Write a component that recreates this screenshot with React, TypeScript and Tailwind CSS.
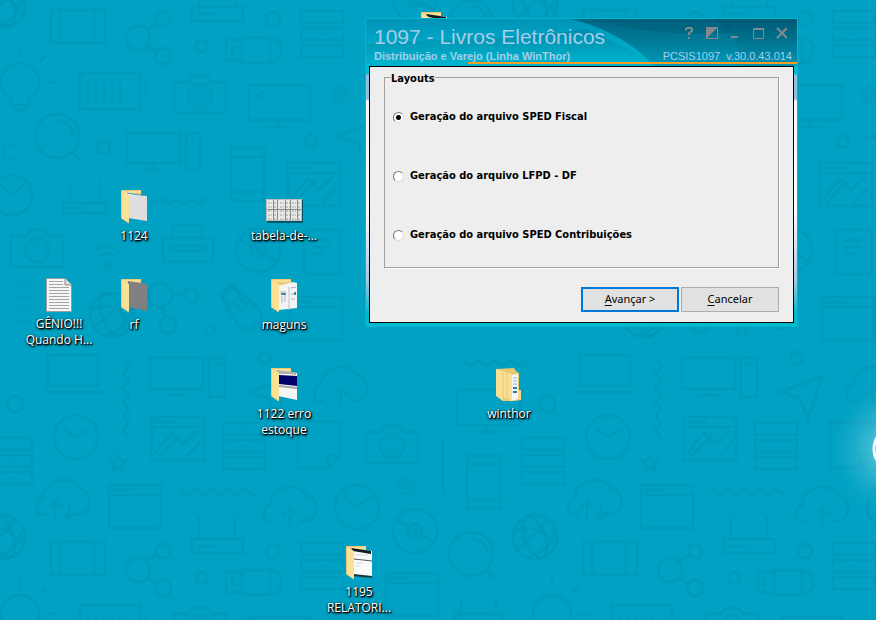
import type { ReactNode } from "react";

type IconKind = "paper" | "dark" | "docs" | "blue" | "report" | "full" | "text" | "sheet";

interface Shortcut {
  kind: IconKind;
  lines: string[];
  place: string;
}

const shortcuts: Shortcut[] = [
  { kind: "report", lines: [], place: "left-[394px] top-3" },
  { kind: "paper", lines: ["1124"], place: "left-[94px] top-[190px]" },
  { kind: "sheet", lines: ["tabela-de-..."], place: "left-[244px] top-[190px]" },
  { kind: "text", lines: ["GÊNIO!!!", "Quando H..."], place: "left-[19px] top-[278px]" },
  { kind: "dark", lines: ["rf"], place: "left-[94px] top-[279px]" },
  { kind: "docs", lines: ["maguns"], place: "left-[244px] top-[279px]" },
  { kind: "blue", lines: ["1122 erro", "estoque"], place: "left-[244px] top-[368px]" },
  { kind: "full", lines: ["winthor"], place: "left-[469px] top-[368px]" },
  { kind: "report", lines: ["1195", "RELATORI..."], place: "left-[319px] top-[546px]" },
];

const layouts = [
  { id: "fiscal", label: "Geração do arquivo SPED Fiscal" },
  { id: "lfpd", label: "Geração do arquivo LFPD - DF" },
  { id: "contrib", label: "Geração do arquivo SPED Contribuições" },
];

function Servers({ x, y }: { x: number; y: number }) {
  return (
    <g transform={`translate(${x} ${y})`}>
      <rect width="42" height="12" />
      <rect y="17" width="42" height="12" />
      <rect y="34" width="42" height="12" />
      <path d="M17 6h8M17 23h8M17 40h8" strokeWidth="1" />
    </g>
  );
}

function Camera({ x, y }: { x: number; y: number }) {
  return (
    <g transform={`translate(${x} ${y})`}>
      <path d="M0 6H15L19 0H33L37 6H52V37H0Z" />
      <circle cx="26" cy="20" r="12" />
      <circle cx="26" cy="20" r="8" strokeWidth="1" />
    </g>
  );
}

function Share({ x, y }: { x: number; y: number }) {
  return (
    <g transform={`translate(${x} ${y})`}>
      <circle r="12" />
      <circle cx="25" cy="-19" r="7" />
      <circle cx="25" cy="18" r="8" />
      <path d="M9-9L20-15M10 8L18 14" />
    </g>
  );
}

function Browser({ x, y, picture }: { x: number; y: number; picture?: boolean }) {
  return (
    <g transform={`translate(${x} ${y})`}>
      <path d="M0 0H52V43H0ZM0 10H52M4 5H24" />
      {picture && <path d="M3 36L20 16L31 27L46 13M6 40L28 18M34 40L49 24" />}
    </g>
  );
}

function Globe({ x, y }: { x: number; y: number }) {
  return (
    <g transform={`translate(${x} ${y})`}>
      <circle r="22" />
      <ellipse rx="10" ry="22" transform="rotate(-20)" />
      <path d="M-21-5Q0-17 20 8M-18 13Q0-2 13-18M-8 20Q12 18 20-8" />
    </g>
  );
}

function Clock({ x, y }: { x: number; y: number }) {
  return (
    <g transform={`translate(${x} ${y})`}>
      <circle r="22" />
      <path d="M-13-9L0 0L12-7" />
    </g>
  );
}

function Magnifier({ x, y }: { x: number; y: number }) {
  return (
    <g transform={`translate(${x} ${y})`}>
      <circle r="22" />
      <path d="M0-16Q15-14 16 0M16 17L24 25" />
    </g>
  );
}

function Cloud({ x, y, both }: { x: number; y: number; both?: boolean }) {
  return (
    <g transform={`translate(${x} ${y})`}>
      <path d="M-16 13C-30 17-29-1-20-3C-19-24 11-26 15-13C30-12 30 13 15 13H10" />
      {both ? <path d="M-8 18V0L-14 6M-8 0L-2 6M6 0V18L0 12M6 18L12 12" /> : <path d="M0 18V0L-7 7M0 0L7 7" />}
    </g>
  );
}

function Disc({ x, y }: { x: number; y: number }) {
  return (
    <g transform={`translate(${x} ${y})`}>
      <circle r="22" />
      <circle r="7" />
      <circle r="2" />
      <path d="M-18-11L-7-4M7 4L18 11" />
    </g>
  );
}

// The pattern repeats every 532px; shapes that cross a tile edge are drawn on both sides of it.
function Wallpaper() {
  return (
    <svg className="absolute inset-0 h-full w-full" aria-hidden="true">
      <defs>
        <pattern id="gadgets" width="532" height="532" patternUnits="userSpaceOnUse">
          <g fill="none" stroke="#008eb1" strokeWidth="3" strokeOpacity="0.36">
            <Globe x={3} y={5} />
            <Globe x={535} y={5} />
            <Globe x={3} y={537} />
            <Globe x={535} y={537} />
            <Globe x={112} y={315} />
            <path d="M51 10H105V43H51ZM60 10V43M94 10V43" />
            <Share x={138} y={38} />
            <path d="M192 7H243V21H192ZM199 0V7M235 0V7M197 14H215" />
            <circle cx="202" cy="46" r="6" />
            <circle cx="273" cy="19" r="7" />
            <path d="M226 40H242V60H226ZM242 38H270V63H242ZM270 38Q281 39 281 50Q281 62 270 63M232 45V55" />
            <Servers x={301} y={11} />
            <path d="M11 99Q1 93 1 82A19 19 0 0 1 39 82Q39 93 29 99V105H11ZM13 110H27M20 46V56M46 55L40 62M47 82H57" />
            <path d="M80 73H140V109H80ZM146 84V97" />
            <path d="M88 82V103M96 82V103M104 82V103M113 82V103M120 82V103" strokeWidth="3" />
            <Camera x={174} y={76} />
            <path d="M249 85H310V120H249ZM278 120V126M266 127H289M256 98L264 91" />
            <circle cx="338" cy="95" r="8" strokeDasharray="3 2" />
            <circle cx="338" cy="95" r="4" />
            <Magnifier x={57} y={136} />
            <path d="M98 142H109V153H98ZM103 138V142" />
            <circle cx="10" cy="152" r="7" strokeDasharray="3 2" />
            <path d="M127 133H180V163H127ZM153 163V169M143 170H163M186 133H200V170H186ZM190 139H196" />
            <path d="M305 140L311 134L317 140L315 147H307Z" />
            <path d="M231 148H264V201H231ZM231 157H264M231 192H264M245 196H251" />
            <path d="M338 137L380 118L366 161L357 142Z" />
            <circle cx="12" cy="195" r="20" />
            <path d="M-1 184L12 195L24 184" />
            <path d="M63 203H106V213H63ZM70 181V203M100 181V203M68 208H82" />
            <Browser x={288} y={163} picture />
            <path d="M150 200L156 204L163 199L170 204L177 199L184 204L191 199L198 204L207 198" />
            <path d="M163 238H213V262H163ZM173 238V225H202V238M170 246H206V251H170Z" />
            <Camera x={11} y={230} />
            <path d="M95 252Q107 241 119 252M99 257Q107 250 115 257" />
            <circle cx="107" cy="266" r="3" />
            <Disc x={258} y={250} />
            <path d="M304 230H340V274H304ZM312 240H330M312 247H330M312 254H324" />
            <g>
              <circle cx="160" cy="295" r="12" />
              <circle cx="191" cy="295" r="7" />
              <circle cx="168" cy="325" r="8" />
              <path d="M172 295H184M162 307L165 317" />
            </g>
            <path d="M230 285L240 295L230 305L220 295ZM234 302L245 313M240 298L247 305" />
            <path d="M222 298L232 285L258 308Q266 317 255 326Q247 333 238 325Z" />
            <path d="M13 285H31M13 297H31M13 309H31M13 321H31" strokeDasharray="4 3" />
            <circle cx="210" cy="331" r="5" />
            <Browser x={290} y={297} />
            <path d="M48 355H98V386H48ZM43 392H105" />
            <path d="M150 358H203V389H150ZM177 389V394M166 395H187M209 358H225V397H209ZM213 364H221" />
            <path d="M125 360L129 367L123 374L129 381L123 388L129 395L123 402L129 409L123 416L129 423L123 430L129 438" />
            <circle cx="15" cy="404" r="8" />
            <path d="M248 392L290 377L276 419L268 398Z" />
            <circle cx="265" cy="358" r="6" />
            <Cloud x={341} y={388} />
            <Servers x={223} y={423} />
            <Servers x={-10} y={438} />
            <Servers x={522} y={438} />
            <path d="M298 422H340V455L328 468H298ZM328 468V455H340" />
            <Camera x={366} y={426} />
            <Clock x={76} y={437} />
            <Browser x={152} y={417} picture />
            <path d="M118 455L121 460L126 461L122 465L123 471L118 468L113 471L114 465L110 461L115 460Z" />
            <Cloud x={63} y={501} both />
            <Browser x={109} y={485} />
            <path d="M180 489L188 495L196 489L204 495L212 489L220 495L228 489L236 495L244 489L254 495" />
            <path d="M199 516V532M235 516V532" />
            <Cloud x={290} y={508} />
            <circle cx="357" cy="507" r="22" />
            <path d="M343 495L357 507L372 495" />
            <circle cx="406" cy="486" r="8" strokeDasharray="3 2" />
            <circle cx="406" cy="486" r="3" />
            <Disc x={415} y={531} />
            <Disc x={415} y={-1} />
            <path d="M443 440V494" />
            <path d="M463 361L471 366L479 361L487 366L495 361L503 366L511 361L519 366L526 361" />
            <path d="M457 390H520V425H457ZM487 425V431M475 432H500" />
            <path d="M467 456H500V508H467ZM467 464H500M467 500H500" />
            <Magnifier x={471} y={22} />
            <Browser x={386} y={41} />
            <path d="M461 68V82M496 68V82M455 82H502V96H455Z" />
          </g>
        </pattern>
        <radialGradient id="glow">
          <stop offset="0.2" stopColor="#8fdcec" stopOpacity="0.65" />
          <stop offset="0.6" stopColor="#5fc4da" stopOpacity="0.28" />
          <stop offset="1" stopColor="#00a2c4" stopOpacity="0" />
        </radialGradient>
      </defs>
      <rect width="100%" height="100%" fill="#00a1c3" />
      <rect width="100%" height="100%" fill="url(#gadgets)" />
      <circle cx="896" cy="449" r="72" fill="url(#glow)" />
      <circle cx="896" cy="449" r="22" fill="#2cb0cc" stroke="#effcff" strokeWidth="3" />
    </svg>
  );
}

const folderContent: Record<"paper" | "dark" | "docs" | "blue" | "report", ReactNode> = {
  paper: (
    <>
      <path d="M5 2L25 6V9L6 5Z" fill="#fff" />
      <path d="M6 3L24 6" stroke="#2b8db0" />
      <path d="M7 5L26 6V31L7 28Z" fill="#dedede" />
    </>
  ),
  dark: <path d="M7 2L26 5V32L7 28Z" fill="#808080" />,
  docs: (
    <>
      <path d="M7 7L22 3L26 4V29L8 31Z" fill="#f3f4f4" />
      <path d="M18 8V31" stroke="#bcc4c8" />
      <path d="M9 13H15M11 17V24M14 16V23M20 9L25 8M20 15H24M20 20H24" stroke="#a2b5bd" />
      <path d="M10 15H15M24 13V16" stroke="#348da8" strokeWidth="2" />
    </>
  ),
  blue: (
    <>
      <path d="M7 3L26 5V32L7 28Z" fill="#f5f5f5" />
      <path d="M6 3L25 6M8 5H24" stroke="#aeb1ad" strokeWidth="2" />
      <path d="M8 7L26 8V18L8 16Z" fill="#00006c" />
      <path d="M8 18L26 20" stroke="#a6a6a6" strokeWidth="2" />
    </>
  ),
  report: (
    <>
      <path d="M7 3L26 5V32L7 28Z" fill="#fafafa" />
      <path d="M5 2L25 5V8L7 5Z" fill="#10191c" />
      <path d="M7 28L26 30V32L7 30Z" fill="#18323b" />
      <path d="M8 13L26 15" stroke="#555" />
      <path d="M9 9H22M10 17H17M9 20H13" stroke="#c7dce4" />
    </>
  ),
};

function DesktopIcon({ kind }: { kind: IconKind }) {
  if (kind === "text") {
    return (
      <svg width="26" height="34" viewBox="0 0 26 34" aria-hidden="true">
        <path d="M.5.5H19L25.5 7V33.5H.5Z" fill="#f6f6f6" stroke="#9a9a9a" />
        <path d="M19 .5V7H25.5" fill="#dedede" stroke="#8a8a8a" />
        <path
          d="M3 3.5H17M3 6.5H17M3 9.5H23M3 12.5H23M3 15.5H23M3 18.5H23M3 21.5H23M3 24.5H23M3 27.5H23M3 30.5H23"
          stroke="#a2a8a8"
        />
      </svg>
    );
  }
  if (kind === "sheet") {
    return (
      <svg width="37" height="24" viewBox="0 0 37 24" aria-hidden="true">
        <path d="M1 1H37V24H1Z" fill="#00566a" />
        <path d="M0 0H36V22H0Z" fill="#e9e9e7" />
        <path d="M2 4H34M2 8H34M2 12H34M2 16H34M2 20H34" stroke="#9d9e9b" strokeDasharray="2 1 1 2" />
        <path d="M7.5 0V22M11.5 0V22M19.5 0V22M24.5 0V22M31.5 0V22M0 10.5H36" stroke="#8a8a8a" />
        <path d="M.5.5H35.5V21.5H.5Z" fill="none" stroke="#bbb" />
      </svg>
    );
  }
  if (kind === "full") {
    return (
      <svg width="26" height="34" viewBox="0 0 26 34" aria-hidden="true">
        <path d="M0 1L18 0L21 4L23 5V22L25 24V32L19 33L7 33L0 27Z" fill="#e8c873" />
        <path d="M15 7L22 6V31L15 33Z" fill="#f4f7f8" />
        <path d="M17 10H21M17 13H21M17 16H21" stroke="#9bb5c0" />
        <path d="M17 20H21M17 24H21" stroke="#247fae" strokeWidth="2" />
        <path d="M0 1L16 6V32L7 29V33L0 28Z" fill="#f9df91" />
        <path d="M7 4V30M11 5V31" stroke="#eac778" />
        <path d="M22 22H25V32L22 31Z" fill="#f6d985" />
      </svg>
    );
  }
  return (
    <svg width="26" height="34" viewBox="0 0 26 34" aria-hidden="true">
      <path d="M0 0H20V5L8 28Z" fill="#eac878" />
      <path d="M1 1H20V3H5Z" fill="#f8df99" />
      {folderContent[kind]}
      <path d="M0 1L8 5V33L0 28Z" fill="#fae194" />
      <path d="M.5 1V28L7.5 33" fill="none" stroke="#e7c985" />
    </svg>
  );
}

function DesktopItem({ kind, lines, place }: Shortcut) {
  return (
    <div className={`absolute flex w-20 flex-col items-center ${place}`}>
      <div className={kind === "sheet" ? "flex h-[38px] items-center pt-1" : "h-[38px]"}>
        <DesktopIcon kind={kind} />
      </div>
      <p className="text-center font-['Open_Sans','Noto_Sans',sans-serif] text-xs leading-4 whitespace-nowrap text-white [text-shadow:1px_1px_1px_#000,1px_1px_2px_#000,0_1px_3px_#000]">
        {lines.map((line) => (
          <span key={line} className="block">
            {line}
          </span>
        ))}
      </p>
    </div>
  );
}

function WindowControls() {
  const button = "flex h-4 w-[23px] items-center justify-center";
  return (
    <div className="flex pt-px">
      <button type="button" aria-label="Ajuda" className={button}>
        <svg width="12" height="12" viewBox="0 0 12 12" fill="none" stroke="#85898b" strokeWidth="2" aria-hidden="true">
          <path d="M3 3.5V2L4.5 1H8L9 2V4L6 6V8M6 10V12" />
        </svg>
      </button>
      <button type="button" aria-label="Recolher" className={button}>
        <svg width="12" height="12" viewBox="0 0 12 12" aria-hidden="true">
          <path d="M.5.5H11.5V11.5H.5Z" fill="none" stroke="#85898b" />
          <path d="M0 0H12L0 12Z" fill="#85898b" />
        </svg>
      </button>
      <button type="button" aria-label="Minimizar" className={button}>
        <svg width="12" height="12" viewBox="0 0 12 12" aria-hidden="true">
          <path d="M2 9H9V11H2Z" fill="#85898b" />
        </svg>
      </button>
      <button type="button" aria-label="Maximizar" className={button}>
        <svg width="12" height="12" viewBox="0 0 12 12" fill="none" stroke="#85898b" aria-hidden="true">
          <path d="M1.5 1.5H11.5V11.5H1.5ZM1 2.5H12" />
        </svg>
      </button>
      <button type="button" aria-label="Fechar" className={button}>
        <svg width="12" height="12" viewBox="0 0 12 12" fill="none" stroke="#85898b" strokeWidth="2" aria-hidden="true">
          <path d="M2 1L12 11M12 1L2 11" />
        </svg>
      </button>
    </div>
  );
}

function TitleArt() {
  return (
    <svg
      className="absolute inset-0 h-full w-full"
      viewBox="0 0 431 47"
      preserveAspectRatio="none"
      aria-hidden="true"
    >
      <defs>
        <linearGradient id="title" x2="0" y2="1">
          <stop stopColor="#0093b7" />
          <stop offset="1" stopColor="#00bbd3" />
        </linearGradient>
        <linearGradient id="swoop" x2="0" y2="1">
          <stop stopColor="#006783" />
          <stop offset="0.5" stopColor="#007c9a" />
          <stop offset="1" stopColor="#009dba" />
        </linearGradient>
        <linearGradient id="sweep" x2="0" y2="1">
          <stop stopColor="#007f9f" />
          <stop offset="1" stopColor="#00b3cb" />
        </linearGradient>
        <linearGradient id="corner" x2="0" y2="1">
          <stop stopColor="#005470" />
          <stop offset="1" stopColor="#0090ac" />
        </linearGradient>
      </defs>
      <path d="M0 0H431V47H0Z" fill="url(#title)" />
      <path d="M0 25C90 19 160 20 220 10L300 47H0Z" fill="url(#sweep)" opacity="0.6" />
      <path d="M205 0H431V47H288C270 27 242 9 205 0Z" fill="url(#swoop)" />
      <path d="M225 0H365V14C310 16 260 12 225 0Z" fill="#005570" opacity="0.35" />
      <path d="M345 0H431V47H376C373 23 365 8 345 0Z" fill="url(#corner)" opacity="0.7" />
    </svg>
  );
}

function WizardWindow() {
  const button =
    "h-[25px] w-[98px] bg-[#e1e1e1] pb-0.5 font-['Noto_Sans','Open_Sans',sans-serif] text-[11px] leading-4 text-black";
  return (
    <main className="absolute top-[18px] left-[365px] w-[433px] border border-[#00b6ca] bg-[linear-gradient(#00bdd4_55px,#91bfdc_56px,#91bfdc_80px,#f4f8fa_82px,#ffffff_190px,#aac8e3_260px,#00b9cf_295px)] pb-[3px] font-['DejaVu_Sans_Condensed','Noto_Sans',sans-serif]">
      <header className="relative">
        <TitleArt />
        <div className="relative flex h-[47px] flex-col pt-[5px] pr-[5px] pl-2 font-['Liberation_Sans',Arial,sans-serif] text-[#a5cdea]">
          <div className="flex items-start justify-between">
            <h1 className="text-[21px] leading-[26px] whitespace-nowrap">1097 - Livros Eletrônicos</h1>
            <WindowControls />
          </div>
          <div className="flex justify-between text-[11px] leading-3 whitespace-nowrap">
            <p className="font-bold">Distribuição e Varejo (Linha WinThor)</p>
            <p className="flex gap-1.5">
              <span>PCSIS1097</span>
              <span>v.30.0.43.014</span>
            </p>
          </div>
        </div>
        <div className="absolute right-0 bottom-[2px] left-[102px] h-[2px] bg-[#f39b22]" />
      </header>
      <form className="mx-[3px] border border-black bg-[#eeeeee] px-3.5 pt-0.5 pb-2.5" onSubmit={(e) => e.preventDefault()}>
        <fieldset className="border border-[#a0a0a0] pr-2 pb-6 pl-1.5 shadow-[1px_1px_0_#fff]">
          <legend className="pt-1 text-[11px] leading-3 font-bold">Layouts</legend>
          <div className="flex flex-col gap-[43px] pt-6 pl-0.5">
            {layouts.map((item, index) => (
              <label key={item.id} className="flex h-4 items-center gap-1.5 text-[11px] leading-4 font-bold whitespace-nowrap">
                <input
                  type="radio"
                  name="layout"
                  value={item.id}
                  defaultChecked={index === 0}
                  className="size-[11px] shrink-0 appearance-none rounded-full border border-[#777] border-r-[#ddd] border-b-[#ddd] bg-white checked:bg-[radial-gradient(circle,#000_0_2px,#fff_3px)]"
                />
                {item.label}
              </label>
            ))}
          </div>
        </fieldset>
        <div className="flex justify-end gap-0.5 pt-[19px]">
          <button type="submit" className={`${button} border-2 border-[#0078d7]`}>
            <span className="underline underline-offset-2">A</span>vançar &gt;
          </button>
          <button type="button" className={`${button} border border-[#adadad]`}>
            <span className="underline underline-offset-2">C</span>ancelar
          </button>
        </div>
      </form>
    </main>
  );
}

export default function App() {
  return (
    <div className="relative h-screen overflow-hidden bg-[#00a1c3]">
      <Wallpaper />
      {shortcuts.map((item) => (
        <DesktopItem key={item.place} {...item} />
      ))}
      <WizardWindow />
    </div>
  );
}
